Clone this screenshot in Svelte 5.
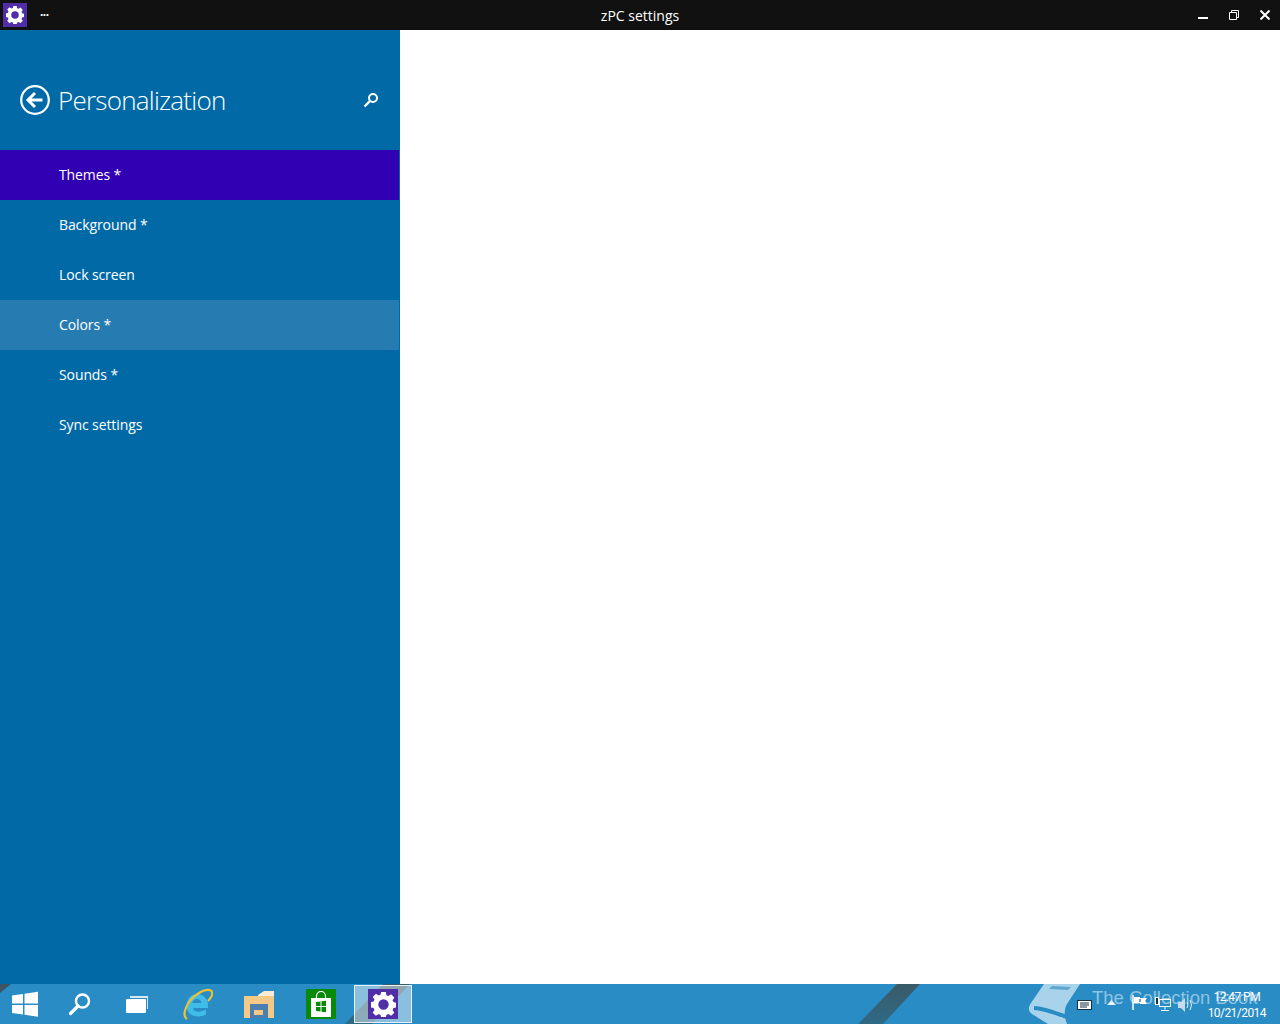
<script>
    let items = [
        { label: "Themes *", state: "selected" },
        { label: "Background *" },
        { label: "Lock screen" },
        { label: "Colors *", state: "hover" },
        { label: "Sounds *" },
        { label: "Sync settings" }
    ];

    const gear = "M9.800 0h4.400l.6 3 1.900.8 2.600-1.700 3.100 3.100-1.700 2.600.8 1.900 3 .6v4.400l-3 .6-.8 1.900 1.700 2.600-3.100 3.100-2.600-1.700-1.900.8-.6 3H9.800l-.6-3-1.900-.8-2.600 1.700-3.100-3.100 1.700-2.600-.8-1.900-3-.6V9.800l3-.6.8-1.900-1.700-2.600 3.100-3.100 2.600 1.700 1.900-.8zM12 7a5 5 0 1 0 0 10 5 5 0 0 0 0-10z";
</script>

<div class="screen">
    <header class="titlebar">
        <div class="app-icon">
            <svg width="18" height="18" viewBox="0 0 24 24"><path d={gear} fill="#fff" fill-rule="evenodd" /></svg>
        </div>
        <span class="dots">...</span>
        <span class="win-title">zPC settings</span>
        <div class="win-buttons">
            <svg width="10" height="10" viewBox="0 0 10 10"><rect x="0" y="7" width="10" height="2" fill="#fff" /></svg>
            <svg width="10" height="10" viewBox="0 0 10 10"><path d="M.5 2.500h7v7h-7zM2.500 2.500v-2h7v7h-2" fill="none" stroke="#fff" /></svg>
            <svg width="10" height="10" viewBox="0 0 10 10"><path d="M.5.5l9 9M9.500.5l-9 9" fill="none" stroke="#fff" stroke-width="2" /></svg>
        </div>
    </header>

    <div class="body">
        <aside class="sidebar">
            <div class="side-head">
                <svg class="back" width="30" height="30" viewBox="0 0 30 30">
                    <circle cx="15" cy="15" r="13.800" fill="none" stroke="#fff" stroke-width="2.200" />
                    <path d="M8 15h14.500M15 8l-7 7 7 7" fill="none" stroke="#fff" stroke-width="3" />
                </svg>
                <h1>Personalization</h1>
                <svg class="search" width="16" height="16" viewBox="0 0 16 16">
                    <circle cx="10" cy="6" r="4" fill="none" stroke="#fff" stroke-width="2" />
                    <path d="M7 9l-5.500 5.500" stroke="#fff" stroke-width="2.400" />
                </svg>
            </div>
            <nav>
                {#each items as item}
                    <div class="item" class:selected={item.state === "selected"} class:hover={item.state === "hover"}>
                        {item.label}
                    </div>
                {/each}
            </nav>
        </aside>
        <main class="content"></main>
    </div>

    <footer class="taskbar">
        <div class="corner"></div>
        <div class="stripe"></div>
        <div class="stripe second"></div>
        <svg class="book" width="56" height="40" viewBox="0 0 56 40">
            <path d="M16 0H52L39 20c-3 5-3 12 0 20H20L4 30c-4-3-4-7-1-11z" fill="#a9d3ea" />
            <path d="M6 24c8 0 22 5 33 9" fill="none" stroke="#2a8cc4" stroke-width="4" />
            <path d="M24 2l19 1-3 3-19-1z" fill="#5fa8d2" />
        </svg>

        <div class="start-btn">
            <svg width="28" height="26" viewBox="0 0 28 26">
                <path d="M1 4.500l11-1.600v9.600H1zM13.500 2.700L27 .8v11.700H13.500zM1 14h11v9.600L1 22zM13.500 14H27v11.700l-13.500-1.900z" fill="#fff" />
            </svg>
        </div>
        <div class="task-btn b-search">
            <svg width="24" height="24" viewBox="0 0 24 24">
                <circle cx="14.500" cy="9" r="6.500" fill="none" stroke="#fff" stroke-width="2.400" />
                <path d="M10 14l-7.500 7.500" stroke="#fff" stroke-width="3.200" stroke-linecap="round" />
            </svg>
        </div>
        <div class="task-btn b-view">
            <svg width="22" height="17" viewBox="0 0 22 17">
                <path d="M4 0h18v13h-1V2H4z" fill="#d6e8f3" />
                <rect x="0" y="3" width="20" height="14" rx="1" fill="#fff" />
            </svg>
        </div>
        <div class="task-btn b-ie">
            <svg width="32" height="33" viewBox="0 0 32 33">
                <path d="M16 6a11 11 0 0 1 11 11v3H12c.5 4 7 5 13 1.500v5c-8 4-19 2-19.500-8.500C5.500 11 10 6 16 6zM11.500 15h9c-.5-5.500-8.500-5.500-9 0z" fill="#3fbce8" fill-rule="evenodd" />
                <path d="M6 31C0 27 6 12 18 5c6-4 12-4 13-1 1 3-2 7-4 9" fill="none" stroke="#f0c030" stroke-width="2.200" />
            </svg>
        </div>
        <div class="task-btn b-folder">
            <svg width="30" height="27" viewBox="0 0 30 27">
                <path d="M14 4L20 0h10v5H14z" fill="#f8ecd4" />
                <path d="M0 5h30v22h-6V13H6v14H0z" fill="#f4c988" />
                <path d="M6 13h18v14H6z" fill="#4c7fb0" />
                <rect x="10" y="19" width="9" height="5" fill="#f4c988" />
            </svg>
        </div>
        <div class="task-btn b-store">
            <div class="store">
                <svg width="22" height="26" viewBox="0 0 22 26">
                    <path d="M6.500 8V5a4.500 4.500 0 0 1 9 0v3" fill="none" stroke="#fff" stroke-width="1.200" />
                    <path d="M1 7h20v19H1z" fill="#fff" />
                    <path d="M6 11l4.500-.6v4.600H6zM11.500 10.300L16 9.700V15h-4.500zM6 16h4.500v4.600L6 20zM11.500 16H16v5.300l-4.500-.6z" fill="#078a07" />
                </svg>
            </div>
        </div>
        <div class="task-btn active">
            <div class="app-icon big">
                <svg width="25" height="25" viewBox="0 0 24 24"><path d={gear} fill="#fff" fill-rule="evenodd" /></svg>
            </div>
        </div>

        <div class="watermark">The Collection Book</div>

        <div class="tray">
            <svg class="t-msg" width="15" height="10" viewBox="0 0 15 10">
                <rect x=".5" y=".5" width="14" height="9" fill="#fff" stroke="#16303f" />
                <path d="M3 3h9M3 5h9M3 7h7" stroke="#16303f" />
            </svg>
            <svg class="t-up" width="9" height="5" viewBox="0 0 9 5"><path d="M4.500 0L9 5H0z" fill="#e8f2f8" /></svg>
            <svg class="t-flag" width="16" height="16" viewBox="0 0 16 16">
                <path d="M1 1v15" stroke="#fff" stroke-width="1.500" />
                <path d="M2 3h6v1h7L13 7l2 3H8V9H2z" fill="#fff" />
                <path d="M8 5v3" stroke="#16303f" />
            </svg>
            <svg class="t-net" width="16" height="14" viewBox="0 0 16 14">
                <rect x="4.500" y="2.500" width="11" height="7" fill="none" stroke="#fff" />
                <rect x=".5" y=".5" width="3" height="7" fill="#16303f" stroke="#fff" />
                <path d="M10 10v2.500M6 13.500h8" stroke="#fff" />
            </svg>
            <svg class="t-vol" width="16" height="14" viewBox="0 0 16 14">
                <path d="M0 4h3l4-4v14l-4-4H0z" fill="#c8dde9" />
                <path d="M9 4q2 3 0 6M12 2q3 5 0 10" fill="none" stroke="#e8f2f8" />
            </svg>
            <div class="clock">
                <span>12:47 PM</span>
                <span>10/21/2014</span>
            </div>
        </div>
    </footer>
</div>

<style>
    :global(body) {
        margin: 0;
        background: #fff;
    }

    .screen {
        display: flex;
        flex-direction: column;
        width: 1280px;
        height: 1024px;
        overflow: hidden;
        font-family: "Open Sans", "Noto Sans", sans-serif;
        color: #fff;
    }

    .titlebar {
        position: relative;
        display: flex;
        align-items: center;
        flex: 0 0 30px;
        background: #111;
        padding-left: 3px;
        box-sizing: border-box;
    }

    .app-icon {
        display: flex;
        align-items: center;
        justify-content: center;
        width: 24px;
        height: 24px;
        background: #4f2ea8;
    }

    .app-icon.big {
        width: 30px;
        height: 30px;
    }

    .dots {
        margin-left: 13px;
        margin-top: -7px;
        font: bold 12px "Liberation Sans", sans-serif;
        letter-spacing: -0.5px;
    }

    .win-title {
        position: absolute;
        left: 0;
        right: 0;
        top: 6px;
        text-align: center;
        font-size: 14px;
        line-height: 19px;
    }

    .win-buttons {
        display: flex;
        gap: 21px;
        margin-left: auto;
        margin-right: 10px;
    }

    .body {
        display: flex;
        flex: 1;
        min-height: 0;
    }

    .sidebar {
        flex: 0 0 400px;
        background: #016aa6;
    }

    .side-head {
        display: flex;
        align-items: center;
        height: 120px;
        padding: 20px 21px 0 20px;
        box-sizing: border-box;
    }

    .side-head h1 {
        margin: 0 0 0 8px;
        font-weight: 300;
        font-size: 26px;
        line-height: 36px;
        letter-spacing: -0.75px;
    }

    .search {
        margin-left: auto;
    }

    nav {
        width: 399px;
    }

    .item {
        height: 50px;
        line-height: 49px;
        padding-left: 59px;
        font-size: 14px;
        letter-spacing: -0.1px;
        color: #fff;
    }

    .item.selected {
        background: #3100b2;
    }

    .item.hover {
        background: #267cb0;
    }

    .content {
        flex: 1;
        background: #fff;
    }

    .taskbar {
        position: relative;
        display: flex;
        align-items: center;
        flex: 0 0 40px;
        background: #2a8cc4;
        overflow: hidden;
    }

    .corner {
        position: absolute;
        left: 0;
        top: 0;
        border-top: 9px solid #3a5664;
        border-right: 11px solid transparent;
    }

    .stripe {
        position: absolute;
        left: 858px;
        top: 0;
        width: 62px;
        height: 40px;
        background: linear-gradient(#3a5a68, #2f6a86);
        clip-path: polygon(39px 0, 62px 0, 25px 40px, 0 40px);
    }

    .stripe.second {
        left: 345px;
        width: 65px;
        clip-path: polygon(38px 0, 65px 0, 27px 40px, 0 40px);
    }

    .book {
        position: absolute;
        left: 1028px;
        top: 0;
    }

    .start-btn {
        display: flex;
        justify-content: center;
        width: 50px;
    }

    .task-btn {
        position: relative;
        display: flex;
        align-items: center;
        justify-content: center;
        height: 38px;
        flex: none;
        box-sizing: border-box;
    }

    .b-search { width: 60px; }
    .b-view { width: 54px; }
    .b-ie { width: 66px; }
    .b-folder { width: 57px; }
    .b-store { width: 67px; }

    .task-btn.active {
        width: 58px;
        background: rgba(255, 255, 255, 0.45);
        border: 1px solid #e6f2f8;
    }

    .store {
        display: flex;
        align-items: center;
        justify-content: center;
        width: 30px;
        height: 30px;
        background: #078a07;
    }

    .watermark {
        position: absolute;
        left: 1092px;
        top: 0;
        font-family: "Liberation Sans", sans-serif;
        font-size: 18.5px;
        line-height: 28px;
        white-space: nowrap;
        color: #8fc4e3;
    }

    .tray {
        position: absolute;
        right: 14px;
        top: 0;
        display: flex;
        align-items: center;
        height: 40px;
    }

    .t-msg { margin-right: 15px; margin-top: 1px; }
    .t-up { margin-right: 16px; margin-top: -4px; }
    .t-flag { margin-right: 7px; margin-top: -5px; }
    .t-net { margin-right: 7px; margin-top: -1px; }
    .t-vol { margin-right: 14px; margin-top: 1px; }

    .clock {
        display: flex;
        flex-direction: column;
        align-items: center;
        margin-top: 2px;
        font-family: Roboto, sans-serif;
        font-size: 12px;
        line-height: 16px;
        letter-spacing: -0.55px;
    }
</style>
